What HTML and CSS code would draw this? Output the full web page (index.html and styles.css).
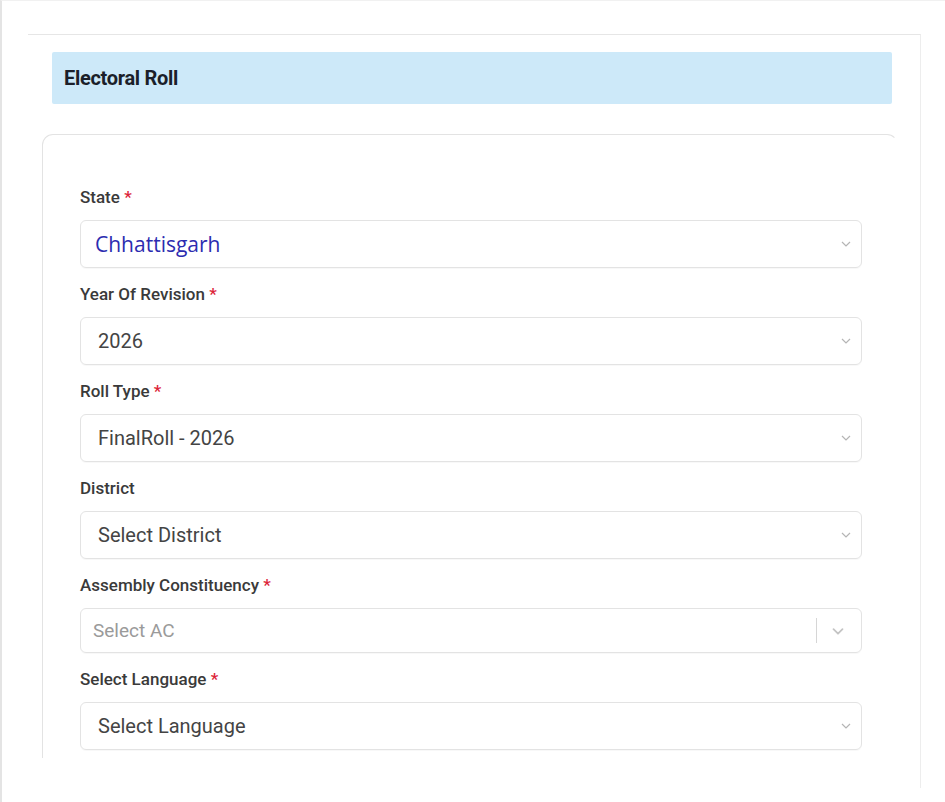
FILE: index.html
```html
<!DOCTYPE html>
<html lang="en">
<head>
<meta charset="utf-8">
<title>Electoral Roll</title>
<link rel="stylesheet" href="styles.css">
</head>
<body>
<div class="frame">
  <div class="panel">
    <div class="header"><h1 class="title">Electoral Roll</h1></div>
    <div class="card">
      <div class="field">
        <div class="label">State <span class="req">*</span></div>
        <div class="select select-state"><span class="value value-blue">Chhattisgarh</span>
          <svg class="chev" viewBox="0 0 10 6" width="10" height="6"><path d="M1 1l4 4 4-4" fill="none" stroke="#b5b5b5" stroke-width="1.2"/></svg>
        </div>
      </div>
      <div class="field">
        <div class="label">Year Of Revision <span class="req">*</span></div>
        <div class="select"><span class="value">2026</span>
          <svg class="chev" viewBox="0 0 10 6" width="10" height="6"><path d="M1 1l4 4 4-4" fill="none" stroke="#b5b5b5" stroke-width="1.2"/></svg>
        </div>
      </div>
      <div class="field">
        <div class="label">Roll Type <span class="req">*</span></div>
        <div class="select"><span class="value">FinalRoll - 2026</span>
          <svg class="chev" viewBox="0 0 10 6" width="10" height="6"><path d="M1 1l4 4 4-4" fill="none" stroke="#b5b5b5" stroke-width="1.2"/></svg>
        </div>
      </div>
      <div class="field">
        <div class="label">District</div>
        <div class="select"><span class="value">Select District</span>
          <svg class="chev" viewBox="0 0 10 6" width="10" height="6"><path d="M1 1l4 4 4-4" fill="none" stroke="#b5b5b5" stroke-width="1.2"/></svg>
        </div>
      </div>
      <div class="field">
        <div class="label">Assembly Constituency <span class="req">*</span></div>
        <div class="select select-ac"><span class="placeholder">Select AC</span>
          <span class="indicators"><span class="sep"></span>
            <svg class="chev-ac" viewBox="0 0 20 20" width="18" height="18"><path d="M5 8l5 5 5-5" fill="none" stroke="#c4c4c4" stroke-width="2" stroke-linecap="round" stroke-linejoin="round"/></svg>
          </span>
        </div>
      </div>
      <div class="field">
        <div class="label">Select Language <span class="req">*</span></div>
        <div class="select"><span class="value">Select Language</span>
          <svg class="chev" viewBox="0 0 10 6" width="10" height="6"><path d="M1 1l4 4 4-4" fill="none" stroke="#b5b5b5" stroke-width="1.2"/></svg>
        </div>
      </div>
    </div>
  </div>
</div>
</body>
</html>
```

FILE: styles.css
```css
html, body {
  margin: 0;
  padding: 0;
  background: #ffffff;
}
body {
  font-family: Roboto, "Liberation Sans", Arial, sans-serif;
  color: #333333;
}
.frame {
  box-sizing: border-box;
  width: 945px;
  height: 802px;
  border-left: 2px solid #e4e4e4;
  border-top: 1px solid #f1f1f1;
  padding-top: 33px;
  padding-left: 26px;
  overflow: hidden;
}
.panel {
  box-sizing: border-box;
  width: 893px;
  height: 754px;
  border-top: 1px solid #e6e6e6;
  border-right: 1px solid #ededed;
  padding: 17px 0 0 14px;
}
.header {
  box-sizing: border-box;
  margin-left: 10px;
  width: 840px;
  height: 52px;
  background: #cde9f9;
  border-radius: 2px;
  display: flex;
  align-items: center;
  padding-left: 12px;
}
.title {
  margin: 0;
  font-size: 20px;
  font-weight: 700;
  color: #1b1f2a;
  letter-spacing: -0.3px;
}
.card {
  box-sizing: border-box;
  margin-top: 30px;
  width: 856px;
  height: 624px;
  border: 1px solid #e3e3e3;
  border-right-color: transparent;
  border-bottom: none;
  border-radius: 11px 11px 0 0;
  padding: 52px 0 0 37px;
}
.field {
  width: 782px;
  margin-bottom: 16px;
}
.label {
  font-size: 17px;
  line-height: 20px;
  font-weight: 500;
  color: #3a3a3a;
  margin-bottom: 13px;
}
.req {
  color: #dc2438;
}
.select {
  box-sizing: border-box;
  height: 48px;
  border: 1px solid #e3e3e3;
  border-radius: 6px;
  display: flex;
  align-items: center;
  justify-content: space-between;
  padding: 0 10px 0 17px;
  box-shadow: 0 1px 1px rgba(0,0,0,0.03);
}
.select-state {
  padding-left: 14px;
}
.value {
  font-size: 20px;
  color: #444444;
}
.value-blue {
  font-family: "Open Sans", Roboto, sans-serif;
  font-size: 21px;
  color: #2c2cb0;
}
.chev {
  display: block;
}
.select-ac {
  height: 45px;
  padding: 0 14px 0 12px;
}
.placeholder {
  font-size: 19px;
  color: #9a9a9a;
}
.indicators {
  display: flex;
  align-items: center;
  gap: 12px;
}
.sep {
  width: 1px;
  height: 25px;
  background: #d6d6d6;
}
.chev-ac {
  display: block;
}
```
